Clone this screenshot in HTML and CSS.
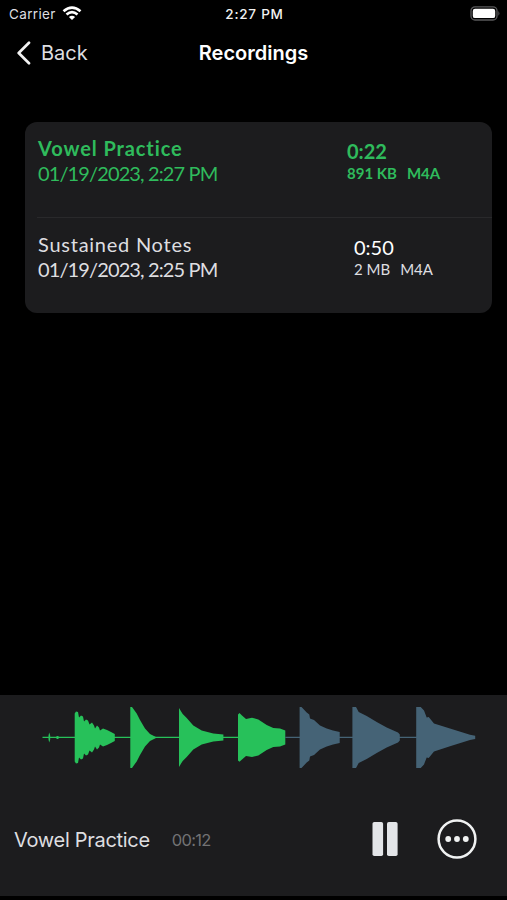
FILE: index.html
```html
<!DOCTYPE html>
<html lang="en">

<head>
    <meta charset="utf-8">
    <meta name="viewport" content="width=device-width, initial-scale=1" />
    <title>Recordings</title>
    <link rel="stylesheet" href="styles.css">
</head>

<body>
    <div class="status">
        <div class="carrier">
            <span>Carrier</span>
            <svg width="20" height="16" viewBox="0 0 20 16" fill="none" stroke="#fff" stroke-width="2.7">
                <path d="M1.5 5.2Q10 -2 18.5 5.2" />
                <path d="M4.5 8.5Q10 3.9 15.5 8.5" />
                <path d="M10 14.1L6.9 10.9Q10 8.5 13.1 10.9Z" fill="#fff" stroke="none" />
            </svg>
        </div>
        <div class="clock">2:27 PM</div>
        <svg class="battery" width="31" height="16" viewBox="0 0 31 16">
            <rect x="2" y=".8" width="26" height="13.2" rx="4" fill="none" stroke="#59595b" stroke-width="1.3" />
            <rect x="3.8" y="2.7" width="22.4" height="9.4" rx="2.2" fill="#fff" />
            <path d="M29.4 5.1Q31.4 7.4 29.4 9.7Z" fill="#59595b" />
        </svg>
    </div>

    <header>
        <div class="back">
            <svg width="16" height="24" viewBox="0 0 16 24" fill="none" stroke="#f2f2f2" stroke-width="2.7" stroke-linecap="round" stroke-linejoin="round">
                <path d="M14 1.8L3.7 12L14 22.2" />
            </svg>
            <span>Back</span>
        </div>
        <h1>Recordings</h1>
    </header>

    <ul class="list">
        <li class="row playing">
            <div class="info">
                <div class="name">Vowel Practice</div>
                <div class="date">01/19/2023, 2:27 PM</div>
            </div>
            <div class="meta">
                <div class="length">0:22</div>
                <div class="size"><span>891 KB</span><span>M4A</span></div>
            </div>
        </li>
        <li class="row">
            <div class="info">
                <div class="name">Sustained Notes</div>
                <div class="date">01/19/2023, 2:25 PM</div>
            </div>
            <div class="meta">
                <div class="length">0:50</div>
                <div class="size"><span>2 MB</span><span>M4A</span></div>
            </div>
        </li>
    </ul>

    <footer class="player">
        <svg class="wave" width="507" height="85" viewBox="0 -42.4 507 85">
            <!-- played -->
            <g fill="#27c15a">
                <path d="M42.5 -.7H285V.7H42.5Z" />
                <path d="M48.5 -2L49.2 -5L50.2 -2V2L49.2 5L48.5 2ZM56.5 -1.5H58.5V1.5H56.5Z" />
                <path d="M74.7 -24L76 -26L78 -25.5L79 -20L81 -22L83 -21L84 -16L86 -18L88 -17L89.5 -13L92 -15L94 -12L95 -9L97 -12L99 -10L100 -7L103 -9L107 -7.5L111 -5.5L114.8 -3.5V3.5L111 5.5L107 7.5L103 9L100 7L99 10L97 12L95 9L94 12L92 15L89.5 13L88 17L86 18L84 16L83 21L81 22L79 20L78 25.5L76 26L74.7 24Z" />
                <path d="M130.3 -30.5H132L136.7 -24L140 -17.5L145 -9L150 -3.5L156 -.5V.5L150 3.5L145 9L140 17.5L136.7 24L132 30.5H130.3Z" />
                <path d="M179 -29.5L180.5 -27L182.7 -23.5L186.7 -19.5L193.3 -12L201.7 -7L213.3 -4L223.4 -3V3L213.3 4L201.7 7L193.3 12L186.7 19.5L182.7 23.5L180.5 27L179 29.5Z" />
                <path d="M238 -23L239.5 -24.3L242 -22L246 -18.5L252 -19.7L258.3 -18L266.7 -12.5L273.3 -9.5L280 -9L285.3 -7V7L280 9L273.3 9.5L266.7 12.5L258.3 18L252 19.7L246 18.5L242 22L239.5 24.3L238 23Z" />
            </g>
            <!-- remaining -->
            <g fill="#456376">
                <path d="M285.3 -.7H475V.7H285.3Z" />
                <path d="M299.6 -30.5H301.5L306.7 -25L309.3 -23L310 -19L314 -17.5L320 -12L326.7 -9L333 -7L339.7 -5.5V5.5L333 7L326.7 9L320 12L314 17.5L310 19L309.3 23L306.7 25L301.5 30.5H299.6Z" />
                <path d="M352.4 -30.5H356L358.7 -25.5L366.7 -21.5L376.7 -15.5L386.7 -10L398 -5L399.8 -3V3L398 5L386.7 10L376.7 15.5L366.7 21.5L358.7 25.5L356 30.5H352.4Z" />
                <path d="M416.2 -30.5H420.7L424 -27L426.7 -20L428.7 -20.5L434 -14L450 -8.8L470 -2.7L475.2 -1.7V1.7L470 2.7L450 8.8L434 14L428.7 20.5L426.7 20L424 27L420.7 30.5H416.2Z" />
            </g>
        </svg>
        <div class="controls">
            <span class="track">Vowel Practice</span>
            <span class="elapsed">00:12</span>
            <svg class="pause" width="26" height="34" viewBox="0 0 26 34" fill="#e3e5e8">
                <rect x=".5" y="0" width="10.6" height="34" rx="1.8" />
                <rect x="15" y="0" width="10.6" height="34" rx="1.8" />
            </svg>
            <svg class="more" width="40" height="40" viewBox="0 0 40 40" fill="#f0f2f2">
                <circle cx="20" cy="20" r="18.4" fill="none" stroke="#f0f2f2" stroke-width="2.5" />
                <circle cx="11.2" cy="20" r="2.9" />
                <circle cx="20" cy="20" r="2.9" />
                <circle cx="28.8" cy="20" r="2.9" />
            </svg>
        </div>
    </footer>
</body>

</html>
```
FILE: styles.css
```css
body {
    margin: 0;
    height: 100vh;
    overflow: hidden;
    display: flex;
    flex-direction: column;
    background-color: #000;
    color: #dedee0;
    font-family: Inter, "Liberation Sans", sans-serif;
}

.status {
    display: grid;
    grid-template-columns: 1fr auto 1fr;
    align-items: center;
    height: 27px;
    padding: 0 7px 0 9px;
    font-size: 13.5px;
}

.carrier {
    display: flex;
    align-items: center;
    gap: 6px;
    letter-spacing: 0.35px;
}

.clock {
    color: #f2f2f2;
    font-weight: 500;
    letter-spacing: 0.75px;
}

.battery {
    justify-self: end;
}

header {
    display: grid;
    grid-template-columns: 1fr auto 1fr;
    align-items: center;
    height: 51px;
    padding: 0 15px;
}

.back {
    display: flex;
    align-items: center;
    gap: 10px;
    font-size: 20px;
}

h1 {
    margin: 0;
    color: #fff;
    font-size: 20px;
    font-weight: 600;
}

.list {
    list-style: none;
    margin: 44px 15px 0 25px;
    padding: 0 0 0 12px;
    height: 191px;
    border-radius: 12px;
    background-color: #1c1c1e;
    font-family: Lato, "Open Sans", sans-serif;
}

.row {
    display: grid;
    grid-template-columns: 316px 1fr;
    box-sizing: border-box;
    height: 95px;
    padding-top: 14px;
}

.row + .row {
    border-top: 1px solid #29292b;
}

.row.playing {
    grid-template-columns: 309px 1fr;
    color: #2fbb5c;
    font-weight: bold;
}

.info {
    padding-left: 1px;
    font-size: 20px;
    line-height: 25px;
}

.name {
    letter-spacing: 0.75px;
}

.playing .name {
    letter-spacing: 0.9px;
}

.date {
    font-weight: normal;
    letter-spacing: -0.88px;
}

.meta {
    padding: 3px 0 0 1px;
}

.length {
    font-size: 20px;
    line-height: 24px;
}

.row:not(.playing) .length {
    color: #fff;
}

.size {
    display: flex;
    gap: 10px;
    font-size: 15px;
    line-height: 20px;
}

.player {
    height: 201px;
    margin: auto 0 4px;
    background-color: #1c1c1e;
}

.wave {
    display: block;
}

.controls {
    display: flex;
    align-items: center;
    height: 118px;
    padding: 0 30px 0 14px;
}

.track {
    padding-top: 1px;
    font-size: 20px;
    letter-spacing: -0.3px;
}

.elapsed {
    margin-left: 22px;
    padding-top: 1px;
    color: #727274;
    font-size: 16.5px;
    letter-spacing: -0.7px;
}

.pause {
    margin-left: auto;
}

.more {
    margin-left: 39px;
}
```
